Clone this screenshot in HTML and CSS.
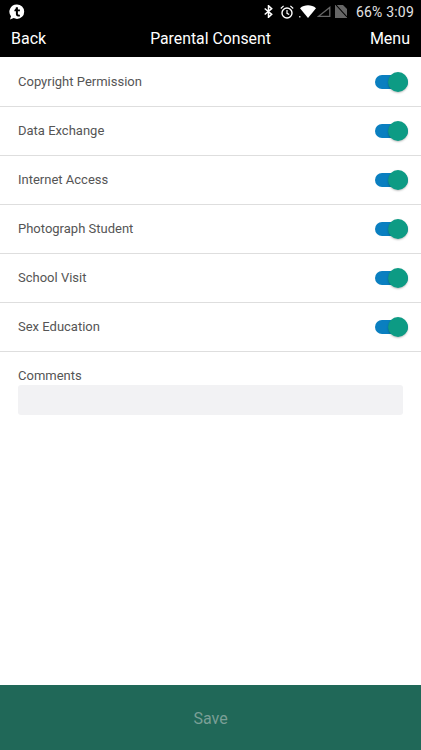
FILE: index.html
```html
<!DOCTYPE html>
<html>
<head>
    <meta charset="UTF-8">
    <meta name="viewport" content="width=device-width, initial-scale=1.0">
    <title>Parental Consent</title>
    <link rel="stylesheet" href="styles.css">
</head>
<body>
    <div id="app_box">
        <!--status bar-->
        <div class="status_row">
            <svg class="app_icon" viewBox="0 0 16 16" width="16" height="16">
                <path fill="#fff" d="M8 .5a7.2 7.2 0 0 1 0 14.4c-1.200 0-2.300-.3-3.300-.8L1 15.500l1-3.300A7.200 7.200 0 0 1 8 .5z"/>
                <path fill="#000" d="M6.900 3.200h2v2.300h2v1.800h-2v2.500c0 .6.5.9 1 .9h1v1.800H9.200c-1.500 0-2.300-1-2.300-2.400V7.300H5.400V5.900c.9-.3 1.400-1.400 1.500-2.700z"/>
            </svg>
            <div class="status_right">
                <svg class="bt_icon" viewBox="0 0 9 13" width="9" height="13">
                    <path fill="none" stroke="#fff" stroke-width="1.500" d="M.7 3.500l7 5.800-3.200 3V.7l3.200 3-7 5.800"/>
                </svg>
                <svg class="alarm_icon" viewBox="0 0 14 14" width="14" height="14">
                    <circle cx="7" cy="8" r="5" fill="none" stroke="#fff" stroke-width="1.400"/>
                    <path fill="none" stroke="#fff" stroke-width="1.200" d="M7 5v3.300l2.200 1.300M.8 3.500L3.600.9M13.200 3.500L10.400.9"/>
                </svg>
                <svg class="wifi_icon" viewBox="0 0 17 13" width="17" height="13">
                    <path fill="#fff" d="M1 3.200C5.500-.6 12.500-.6 17 3.200L9 13z"/>
                    <rect fill="#bbb" x="0" y="11" width="1.500" height="1.500"/>
                </svg>
                <svg class="signal_icon" viewBox="0 0 14 11" width="14" height="11">
                    <path fill="none" stroke="#666" stroke-width="1.300" d="M1.500 10.300h11.300V1.400z"/>
                </svg>
                <svg class="sim_icon" viewBox="0 0 12 13" width="12" height="13">
                    <path fill="#666" d="M0 0h8l4 4v9H0z"/>
                    <path stroke="#000" stroke-width="1.100" d="M1 0l11 12"/>
                </svg>
                <span class="status_text">66% 3:09</span>
            </div>
        </div>

        <!--header-->
        <div class="header_row">
            <span>Back</span>
            <span class="header_title">Parental Consent</span>
            <span class="header_menu">Menu</span>
        </div>

        <!--consent list-->
        <div class="consent_list">
            <div class="consent_row"><span>Copyright Permission</span><div class="toggle"><i class="knob"></i></div></div>
            <div class="consent_row"><span>Data Exchange</span><div class="toggle"><i class="knob"></i></div></div>
            <div class="consent_row"><span>Internet Access</span><div class="toggle"><i class="knob"></i></div></div>
            <div class="consent_row"><span>Photograph Student</span><div class="toggle"><i class="knob"></i></div></div>
            <div class="consent_row"><span>School Visit</span><div class="toggle"><i class="knob"></i></div></div>
            <div class="consent_row"><span>Sex Education</span><div class="toggle"><i class="knob"></i></div></div>
        </div>

        <!--comments-->
        <div class="comments_box">
            <div class="comments_label">Comments</div>
            <div class="comments_input"></div>
        </div>

        <!--save-->
        <div class="save_row">Save</div>
    </div>
</body>
</html>
```
FILE: styles.css
```css
* {padding:0;margin:0;box-sizing:border-box;}
html,body {width:100%;height:100%;background:#fff;}
body {font-family:Roboto,"Liberation Sans",sans-serif;overflow:hidden;}

#app_box {width:100%;height:750px;display:flex;flex-direction:column;}

/*status bar*/
.status_row {height:24px;background:#000;display:flex;align-items:center;justify-content:space-between;padding:0 7px 0 9px;flex-shrink:0;}
.status_right {display:flex;align-items:center;}
.status_right svg {display:block;margin-bottom:1px;}
.bt_icon {margin-right:7px;}
.alarm_icon {margin-right:5px;}
.wifi_icon {margin-right:1px;}
.signal_icon {margin-right:4px;}
.status_text {font-size:14px;color:#e4e4e4;margin-left:9px;letter-spacing:.2px;}

/*header*/
.header_row {height:33px;background:#000;color:#fff;font-size:16px;display:grid;grid-template-columns:1fr auto 1fr;align-items:center;padding:0 11px 4px;flex-shrink:0;}
.header_title {font-size:15.800px;}
.header_menu {text-align:right;}

/*list*/
.consent_list {margin-top:1px;}
.consent_row {height:49px;display:flex;align-items:center;justify-content:space-between;padding:0 13px 1px 18px;border-bottom:1px solid #dedede;font-size:13px;color:#555;}
.toggle {width:33px;height:14px;margin-top:1px;border-radius:7px;background:#0a7fc0;position:relative;}
.knob {position:absolute;top:-3px;right:0;width:20px;height:20px;border-radius:50%;background:#0d9b84;box-shadow:0 1px 2px rgba(0,0,0,.25);}

/*comments*/
.comments_box {padding:16px 18px 0;flex:1;}
.comments_label {font-size:13px;color:#555;line-height:16px;}
.comments_input {height:30px;margin-top:1px;background:#f2f2f4;border-radius:3px;}

/*save*/
.save_row {height:65px;padding-top:2px;background:#206858;color:#7a9f96;font-size:16px;display:flex;align-items:center;justify-content:center;flex-shrink:0;}
```
